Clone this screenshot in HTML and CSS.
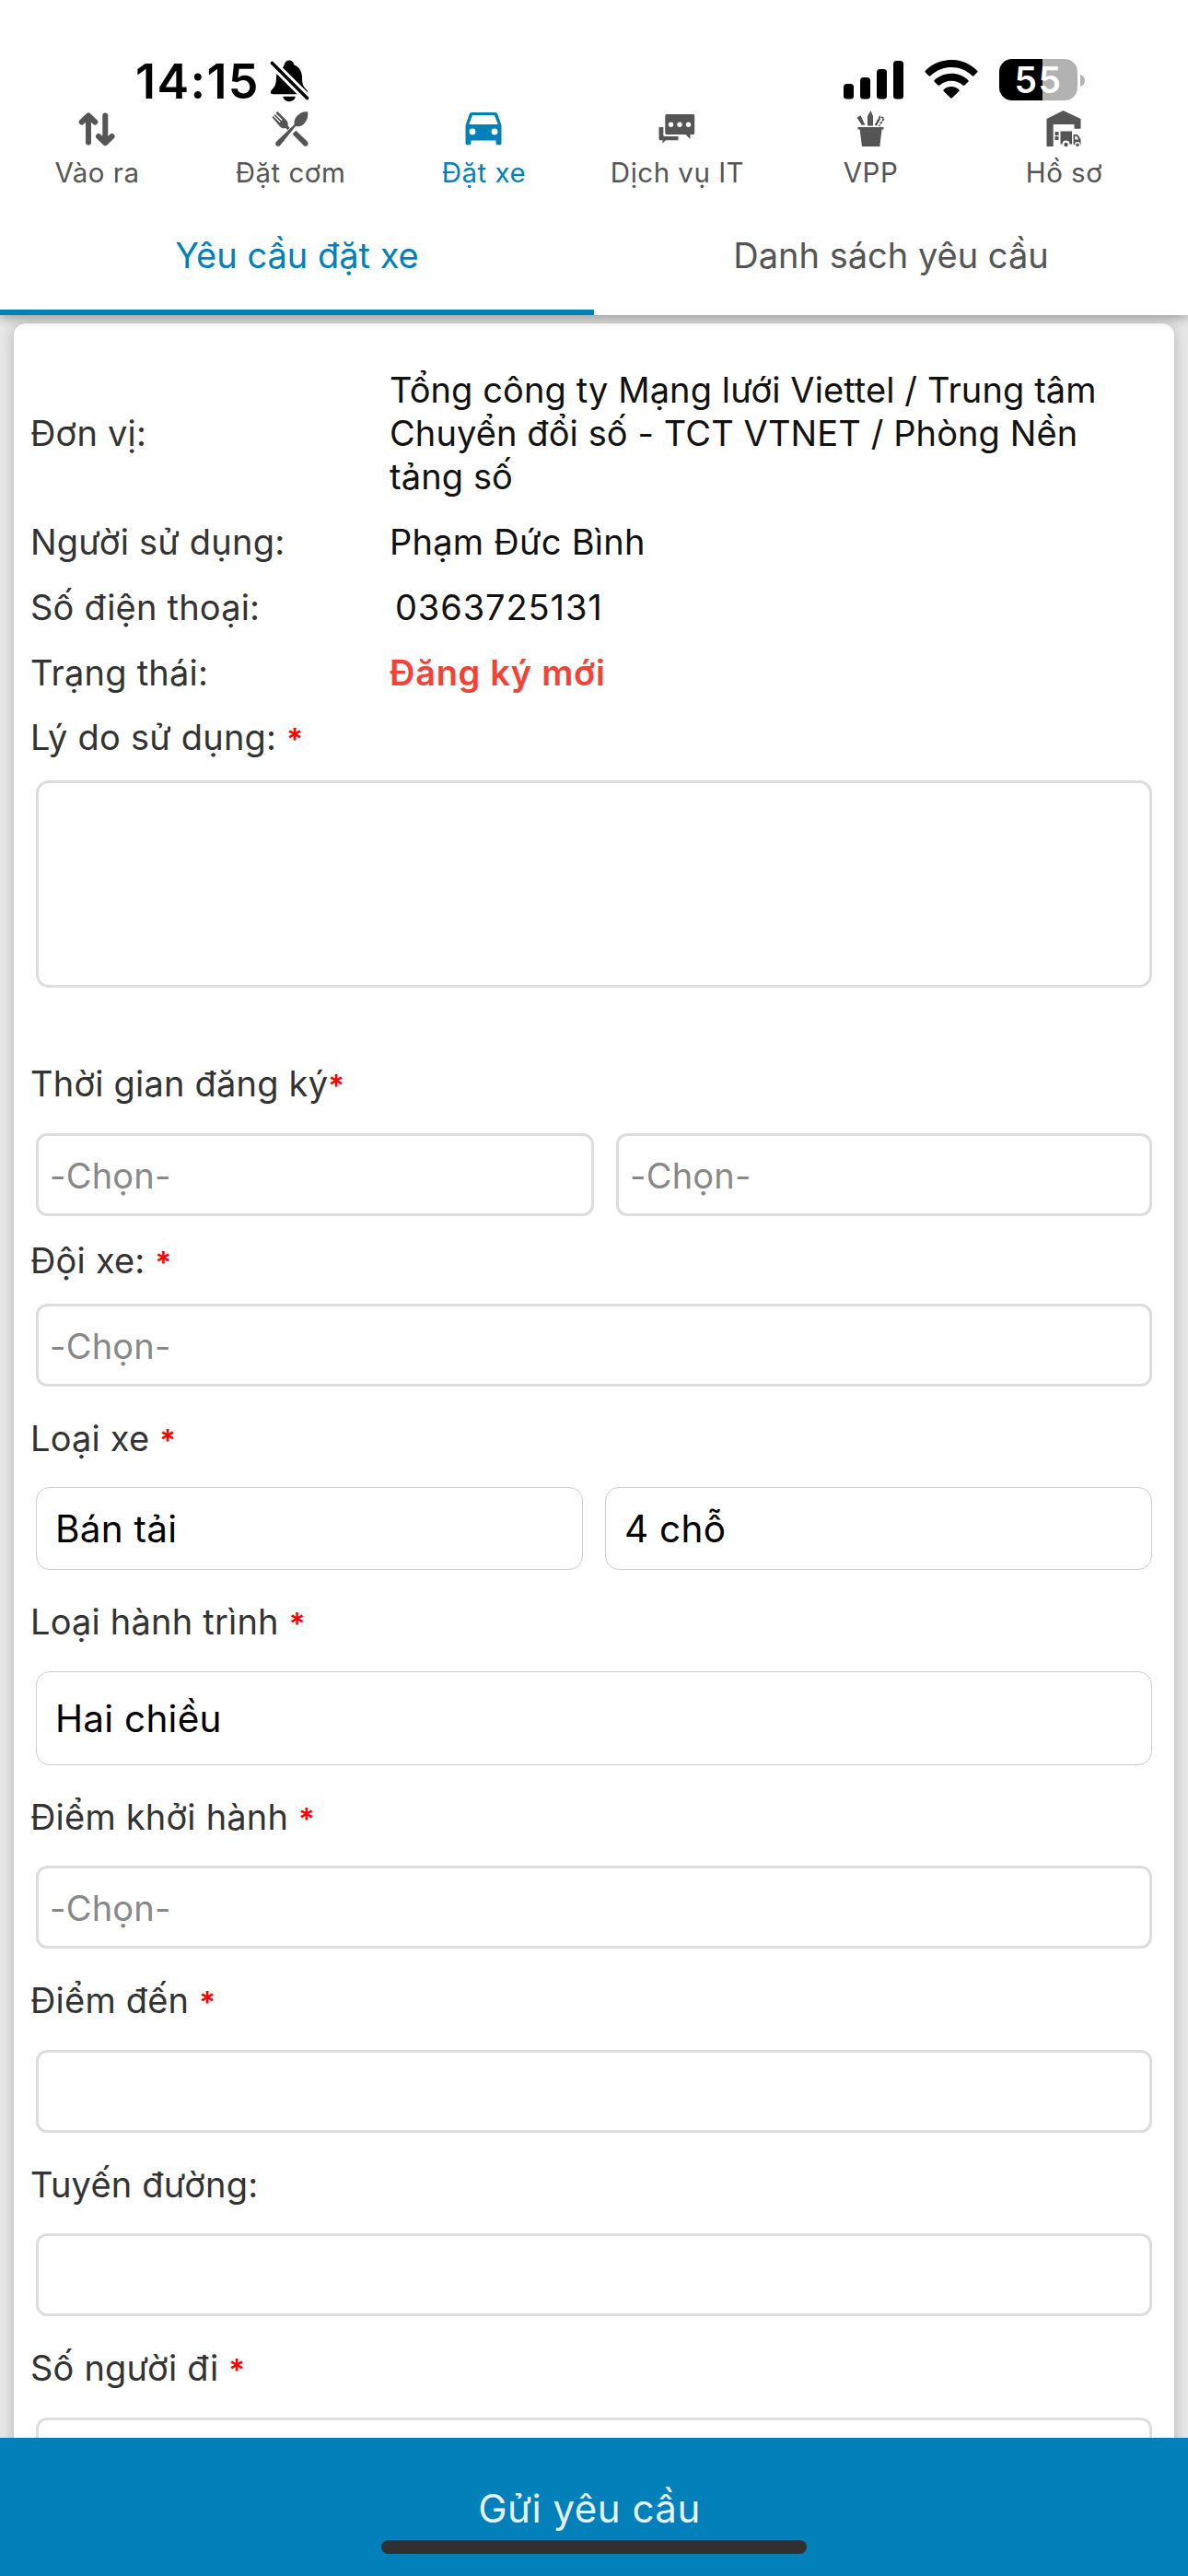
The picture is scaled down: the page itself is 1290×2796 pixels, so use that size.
FILE: index.html
```html
<!DOCTYPE html>
<html lang="vi">
<head>
<meta charset="utf-8">
<title>Đặt xe</title>
<link rel="stylesheet" href="styles.css">
</head>
<body>
<header class="header">
  <div class="status">
    <div class="status-left">
      <span class="clock">14:15</span>
      <svg class="bell" width="43" height="46" viewBox="0 0 43 46">
        <path d="M13.5 8.5C14.8 7.4 15.4 6.600 15.500 5.500C16.400 2 18.500.500 21 .500s4.600 1.500 5.500 5C32.500 8 35 13 35 19c0 7 1 9.500 4.500 13 2.500 2.500 2.500 5-.5 5.300H3.500C.500 37 0 34.500 2.500 32 6 28.500 6.800 26 7 19c0-1.500.2-2.800.5-4z"/>
        <path d="M14.300 39.800h13.500c-.6 3.300-3.300 5.400-6.750 5.400s-6.150-2.100-6.750-5.400z"/>
        <path class="bell-gap" d="M2.500 3.500L41.500 42.500"/>
        <path class="bell-slash" d="M2.500 3.500L40.500 41.500"/>
      </svg>
    </div>
    <div class="status-right">
      <svg class="signal" width="65" height="42" viewBox="0 0 65 42">
        <rect x="0" y="25" width="11" height="16.500" rx="3.500"/>
        <rect x="18" y="18" width="11" height="23.500" rx="3.500"/>
        <rect x="36" y="9" width="11" height="32.500" rx="3.500"/>
        <rect x="54" y="0" width="11" height="41.500" rx="3.500"/>
      </svg>
      <svg class="wifi" width="58" height="42" viewBox="0 0 58 42">
        <path d="M.8 11.800C16-4 42-4 57.200 11.800c.6.600.6 1.200 0 1.800l-3.700 3.700c-.5.500-1.200.5-1.800 0C39 5 19 5 6.300 17.300c-.6.500-1.300.5-1.800 0L.8 13.600c-.6-.6-.6-1.200 0-1.800z"/>
        <path d="M10.700 22C21 12.300 37 12.300 47.300 22c.6.600.6 1.200 0 1.800l-3.800 3.800c-.6.500-1.200.5-1.800 0-7.200-6.500-18.200-6.500-25.400 0-.6.500-1.200.5-1.800 0l-3.800-3.800c-.6-.6-.6-1.200 0-1.800z"/>
        <path d="M20.700 32.200c4.700-4.200 11.900-4.200 16.600 0 .6.500.6 1.200 0 1.700l-7.400 7.300c-.6.600-1.200.6-1.800 0l-7.400-7.300c-.6-.5-.6-1.200 0-1.700z"/>
      </svg>
      <div class="battery"><span>55</span></div>
      <svg class="battery-nub" width="5" height="13" viewBox="0 0 5 13"><path d="M0 0c3 .8 5 3.500 5 6.500S3 12.200 0 13z"/></svg>
    </div>
  </div>

  <nav class="nav">
    <a class="nav-item">
      <svg class="icon" viewBox="0 0 40 40">
        <g fill="none" stroke="currentColor" stroke-width="6" stroke-linecap="round" stroke-linejoin="round"><path d="M11 34.500V8M3.700 12.500L11 5.500l7.300 7M29.300 5.500V32M22 28l7.300 7 7.300-7"/></g>
        <path d="M11 2.500l8 8H3zM29.300 38l8-8h-16z"/>
      </svg>
      <span>Vào ra</span>
    </a>
    <a class="nav-item">
      <svg class="icon" viewBox="0 0 40 40">
        <path d="M39.300 1.500c.5 5.500-1 10-4.500 13.200-2.700 2.400-6 3-8.800 2.300L9.500 37.500c-1.300 1.500-3.200 1.800-4.500.6s-1.100-3.100.3-4.500L24.700 15c-.8-3 .3-6.500 3.200-9.500C31 2.300 35 .8 39.300 1.500z"/>
        <path d="M22.500 25.500l3.800-3.800L38.500 33.300c1.400 1.500 1.500 3.200.3 4.500s-3.200 1.200-4.500-.3z"/>
        <path d="M6.200.8l9.800 9.800c1.800 2 2 4 1.500 6l2.200 2.200-2.400 2.400-2.200-2.200c-2.400.6-4.400.1-6-1.600L.5 7.300l1.200-1.200 7 7 .9-.9-7-7L3.700 4l7 7 .9-.9-7-7z"/>
      </svg>
      <span>Đặt cơm</span>
    </a>
    <a class="nav-item active">
      <svg class="icon" viewBox="0 0 40 40">
        <path fill-rule="evenodd" d="M7.500 2h25c1.400 0 2.400.7 2.900 2L39.500 16v19c0 1.500-.8 2.300-2 2.300h-2c-1.200 0-2-.8-2-2.300v-2.500h-27V35c0 1.500-.8 2.300-2 2.300h-2c-1.200 0-2-.8-2-2.300V16L4.600 4c.5-1.300 1.500-2 2.900-2zm.6 3L4.300 15h31.400L31.900 5zM8 19.500a3.400 3.400 0 1 0 0 6.800 3.400 3.400 0 0 0 0-6.800zm24 0a3.400 3.400 0 1 0 0 6.800 3.400 3.400 0 0 0 0-6.800z"/>
      </svg>
      <span>Đặt xe</span>
    </a>
    <a class="nav-item">
      <svg class="icon" viewBox="0 0 40 40">
        <path fill-rule="evenodd" d="M9 4h28.500c1 0 1.700.7 1.700 1.700v18.600c0 1-.7 1.700-1.700 1.700h-3v5l-5-5H9c-1 0-1.700-.7-1.700-1.700V5.700C7.300 4.700 8 4 9 4zm4.500 8.500a2.700 2.700 0 1 0 0 5.400 2.700 2.700 0 0 0 0-5.400zm9.500 0a2.700 2.700 0 1 0 0 5.400 2.700 2.700 0 0 0 0-5.400zm9.500 0a2.700 2.700 0 1 0 0 5.400 2.700 2.700 0 0 0 0-5.400z"/>
        <path d="M.5 18H5.300v8.500c0 1 .6 1.600 1.600 1.600H21.500v4.200H7.800L4.500 35.500v-3.200H2c-1 0-1.500-.6-1.500-1.500z"/>
      </svg>
      <span>Dịch vụ IT</span>
    </a>
    <a class="nav-item">
      <svg class="icon" viewBox="0 0 40 40">
        <path d="M6.500 18h28v2.500h-2L30.300 39H11L8.600 20.500H6.500zM17 16.500V6L20.500 0 23 6v10.500zM5.500 7.500l4-2.200 5 10.500h-3.800z"/>
        <path fill="none" stroke="currentColor" stroke-width="1.800" stroke-dasharray="3 1" d="M25.500 16l5-9.500 4.500 1.800-5.500 8.700"/>
        <path d="M25 15.500l4.500-7.500 1.700 1-4.200 7.500z"/>
      </svg>
      <span>VPP</span>
    </a>
    <a class="nav-item">
      <svg class="icon" viewBox="0 0 40 40">
        <path d="M1.500 9L19.500 0 38.500 9V19.700H31.500V15H8.700V39H1.500z"/>
        <path d="M10.500 23h4v4h-4zM10.500 28h4v4h-4zM16.500 22.500H29V36.500H26.500a4 4 0 0 0-8 0H16.500z"/>
        <path fill-rule="evenodd" d="M30.500 26h4.500l3.500 5v6H38a3 3 0 0 0-6 0h-1.500zm1.800 1.800v3.700h4l-2.200-3.700z"/>
        <circle cx="22.500" cy="37" r="2.200"/><circle cx="35" cy="37.300" r="1.800"/>
      </svg>
      <span>Hồ sơ</span>
    </a>
  </nav>

  <div class="tabs">
    <div class="tab active">Yêu cầu đặt xe</div>
    <div class="tab">Danh sách yêu cầu</div>
  </div>
</header>

<main class="content">
  <form class="card">
    <div class="info">
      <span class="label">Đơn vị:</span>
      <span class="value">Tổng công ty Mạng lưới Viettel / Trung tâm Chuyển đổi số - TCT VTNET / Phòng Nền tảng số</span>
      <span class="label">Người sử dụng:</span>
      <span class="value name">Phạm Đức Bình</span>
      <span class="label">Số điện thoại:</span>
      <span class="value phone">0363725131</span>
      <span class="label">Trạng thái:</span>
      <span class="value state">Đăng ký mới</span>
    </div>

    <div class="field reason">
      <div class="label">Lý do sử dụng: <b>*</b></div>
      <div class="box area"></div>
    </div>
    <div class="field time">
      <div class="label">Thời gian đăng ký<b>*</b></div>
      <div class="row split">
        <div class="box">-Chọn-</div>
        <div class="box">-Chọn-</div>
      </div>
    </div>
    <div class="field team">
      <div class="label">Đội xe: <b>*</b></div>
      <div class="box">-Chọn-</div>
    </div>
    <div class="field">
      <div class="label">Loại xe <b>*</b></div>
      <div class="row">
        <div class="box picker">Bán tải</div>
        <div class="box picker">4 chỗ</div>
      </div>
    </div>
    <div class="field">
      <div class="label">Loại hành trình <b>*</b></div>
      <div class="box picker tall">Hai chiều</div>
    </div>
    <div class="field">
      <div class="label">Điểm khởi hành <b>*</b></div>
      <div class="box">-Chọn-</div>
    </div>
    <div class="field">
      <div class="label">Điểm đến <b>*</b></div>
      <div class="box"></div>
    </div>
    <div class="field">
      <div class="label">Tuyến đường:</div>
      <div class="box"></div>
    </div>
    <div class="field">
      <div class="label">Số người đi <b>*</b></div>
      <div class="box"></div>
    </div>
  </form>
</main>

<footer class="submit">
  <span class="submit-text">Gửi yêu cầu</span>
  <i class="home-bar"></i>
</footer>
</body>
</html>
```
FILE: styles.css
```css
* { box-sizing: border-box; }

body {
  margin: 0;
  width: 1290px;
  height: 2796px;
  overflow: hidden;
  display: flex;
  flex-direction: column;
  background: #e8e8e8;
  font-family: "Inter", "Liberation Sans", sans-serif;
  font-size: 38px;
  letter-spacing: 0.2px;
  color: #333;
}

.header {
  flex: none;
  height: 342px;
  display: flex;
  flex-direction: column;
  background: #fff;
  box-shadow: 0 3px 12px rgba(0, 0, 0, 0.34);
  z-index: 1;
}

/* Status bar */
.status {
  height: 118px;
  display: flex;
  justify-content: space-between;
  padding: 58px 112px 0 147px;
  color: #000;
}
.status-left, .status-right { display: flex; align-items: flex-start; }
.clock {
  font-size: 52px;
  font-weight: 600;
  line-height: 62px;
  letter-spacing: 1.4px;
}
.bell { margin: 7px 0 0 11px; }
.bell-gap { stroke: #fff; stroke-width: 9.5; }
.bell-slash { stroke: #000; stroke-width: 3.6; stroke-linecap: round; }
.signal { margin-top: 8px; }
.wifi { margin: 7px 0 0 23px; }
.battery {
  width: 85px;
  height: 45px;
  margin: 6px 0 0 23px;
  border-radius: 14px;
  background: linear-gradient(90deg, #000 47px, #b2b2b2 47px);
  color: #fff;
  font-size: 39px;
  font-weight: 600;
  line-height: 46px;
  letter-spacing: 1.5px;
  text-align: center;
}
.battery-nub { margin: 23px 0 0 3px; fill: #b2b2b2; }

/* Service navigation */
.nav {
  display: grid;
  grid-template-columns: repeat(6, 210px);
  height: 100px;
  color: #555;
}
.nav-item {
  display: flex;
  flex-direction: column;
  align-items: center;
  padding-top: 2px;
  font-size: 29.5px;
  line-height: 36px;
  letter-spacing: 0.5px;
}
.nav-item span { margin: 9px 0 0 1px; }
.icon { width: 40px; height: 40px; fill: currentColor; }
.active { color: #0180ba; }

/* Tabs */
.tabs { flex: 1; display: flex; color: #555; }
.tab {
  flex: 1;
  padding-top: 36px;
  line-height: 46px;
  text-align: center;
  letter-spacing: 0;
}
.tab.active { border-bottom: 6px solid #0180ba; }

/* Form card */
.content { flex: 1; min-height: 0; overflow: hidden; padding: 9px 15px 0; }
.card {
  height: 2600px;
  padding: 49px 24px 0;
  background: #fff;
  border-radius: 13px 13px 0 0;
  box-shadow: 0 3px 16px rgba(0, 0, 0, 0.24);
}
.info {
  display: grid;
  grid-template-columns: 390px 790px;
  row-gap: 24.2px;
  align-items: center;
  margin-left: -6px;
  line-height: 46.8px;
}
.value { color: #111; letter-spacing: 0.1px; }
.value.name { letter-spacing: 0.25px; }
.value.phone { padding-left: 6px; letter-spacing: 0.9px; }
.value.state { color: #f44336; font-weight: 600; letter-spacing: 0.7px; }

.field { margin-top: 33px; }
.field > .label {
  height: 46.5px;
  margin: 0 0 30px -6px;
  line-height: 46.5px;
}
.label b {
  color: #f00;
  font-size: 33px;
  font-weight: 600;
  line-height: 1;
}
.field.reason { margin-top: 24px; }
.field.reason > .label { margin-bottom: 23px; }
.field.time { margin-top: 81.5px; }
.field.team { margin-top: 25px; }
.field.team > .label { margin-bottom: 23.5px; }

.row { display: grid; grid-template-columns: 1fr 1fr; gap: 24px; }
.row.split { grid-template-columns: 606px 1fr; }
.box {
  height: 90px;
  padding: 0 12px;
  border: 3px solid #ddd;
  border-radius: 12px;
  color: #888;
  line-height: 87px;
}
.box.area { height: 225px; border-radius: 14px; }
.box.picker {
  padding-left: 20px;
  border: 1px solid #ccc;
  border-radius: 15px;
  color: #000;
  font-size: 40.5px;
  line-height: 89px;
  letter-spacing: 0.25px;
}
.box.tall { height: 102px; line-height: 102px; }

/* Submit bar */
.submit {
  flex: none;
  height: 150px;
  display: flex;
  flex-direction: column;
  align-items: center;
  padding-top: 51px;
  background: #0180ba;
  color: #e6f2ff;
  font-size: 42px;
  line-height: 52px;
  letter-spacing: 0.5px;
  z-index: 1;
}
.submit-text { margin-right: 10px; }
.home-bar {
  width: 462px;
  height: 15px;
  margin-top: 8px;
  border-radius: 8px;
  background: #303030;
}
```
